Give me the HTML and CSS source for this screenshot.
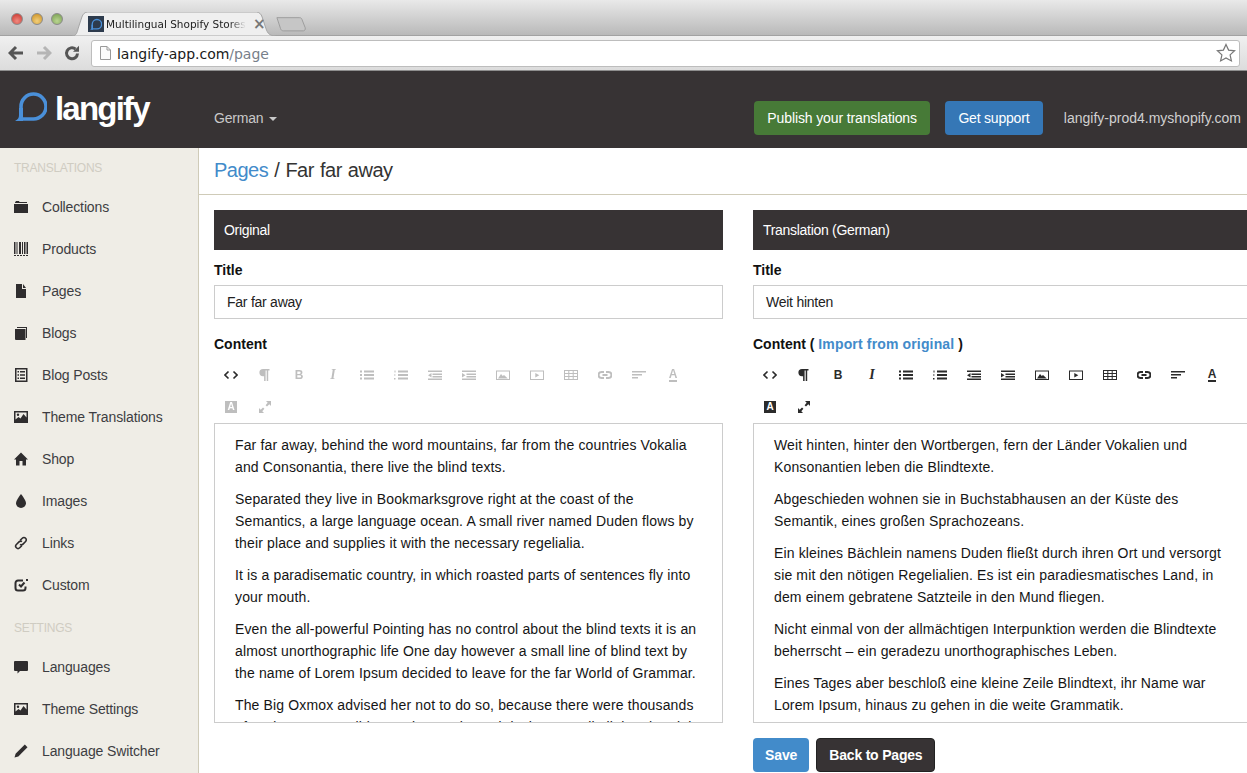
FILE: index.html
```html
<!DOCTYPE html>
<html lang="en">
<head>
<meta charset="utf-8">
<title>langify</title>
<link rel="stylesheet" href="styles.css">
</head>
<body>
<svg class="sprite" aria-hidden="true">
  <symbol id="bubble" viewBox="0 0 32 30"><path class="ring" d="M6 15.500A12.500 12.500 0 1 1 18.500 28H6z"/><path class="tail" d="M4 17h4v13H0c3-1.500 4-3 4-6z"/></symbol>
  <symbol id="i-folder" viewBox="0 0 14 14"><path d="M1 2.500 2 1h3l.5 1H13v1H1zM0 4h14v9H0z"/></symbol>
  <symbol id="i-barcode" viewBox="0 0 14 14"><path d="M0 0h1.500v12H0zM2.500 0h1v12h-1zM5 0h2v12H5zM8 0h1v12H8zM10 0h1.500v12H10zM12.500 0H14v12h-1.500zM0 13h2v1H0zM3 13h2v1H3zM6 13h2v1H6zM9 13h2v1H9zM12 13h2v1h-2z"/></symbol>
  <symbol id="i-file" viewBox="0 0 14 14"><path d="M2 0h6v5h4v9H2zM9 0l3 4H9z"/></symbol>
  <symbol id="i-book" viewBox="0 0 14 14"><path d="M1 3h10.500v11H2a1 1 0 0 1-1-1zM3 1h10v11h-1V2H3z"/></symbol>
  <symbol id="i-list" viewBox="0 0 14 14"><path fill-rule="evenodd" d="M1 0h12.500v14H1zM2.500 1.500v11H12v-11z"/><path d="M3.500 3H5v1.500H3.500zM6 3h5v1.500H6zM3.500 6.300H5v1.500H3.500zM6 6.300h5v1.500H6zM3.500 9.500H5V11H3.500zM6 9.500h5V11H6z"/></symbol>
  <symbol id="i-image" viewBox="0 0 14 14"><path fill-rule="evenodd" d="M0 1h14v12H0zM1.500 2.500v7l3-2.500 2 1.500 3-4.500 3 3.500V2.500z"/><circle cx="4" cy="4.800" r="1.200"/></symbol>
  <symbol id="i-home" viewBox="0 0 14 14"><path d="M7 .5 14 7.500h-2V13.500H8.500V9h-3v4.500H2V7.500H0z"/></symbol>
  <symbol id="i-tint" viewBox="0 0 14 14"><path d="M7 0S2 6 2 9.300a5 4.700 0 0 0 10 0C12 6 7 0 7 0z"/></symbol>
  <symbol id="i-link" viewBox="0 0 14 14"><path class="line" d="M6.200 4.300 8.300 2.200a2.300 2.300 0 0 1 3.300 3.300L9 8.100a2.300 2.300 0 0 1-3 .2M7.800 9.700l-2.100 2.100a2.300 2.300 0 0 1-3.300-3.300L5 5.900a2.300 2.300 0 0 1 3-.2"/></symbol>
  <symbol id="i-edit" viewBox="0 0 14 14"><path class="line thick" d="M11.500 8.500V10a2.500 2.500 0 0 1-2.500 2.500H4A2.500 2.500 0 0 1 1.500 10V5A2.500 2.500 0 0 1 4 2.500h5M5 6.500l2 2 3.500-4"/><path d="M12 1h2v2h-2z"/></symbol>
  <symbol id="i-comment" viewBox="0 0 14 14"><path d="M1 1h12a1 1 0 0 1 1 1v8a1 1 0 0 1-1 1H6l-2.500 2.500V11H1a1 1 0 0 1-1-1V2a1 1 0 0 1 1-1z"/></symbol>
  <symbol id="i-pencil" viewBox="0 0 14 14"><path d="M10.800.5 13.500 3.200 4.300 12.400 0.500 13.500 1.600 9.700z"/></symbol>
  <symbol id="t-code" viewBox="0 0 14 14"><path class="line" d="M4.500 3.500 1 7l3.500 3.500M9.500 3.500 13 7l-3.500 3.500"/></symbol>
  <symbol id="t-para" viewBox="0 0 14 14"><path d="M5 1h6.500v1.500h-1.300V13H8.700V2.500H7.600V13H6.100V8.200H5A3.600 3.600 0 0 1 5 1z"/></symbol>
  <symbol id="t-ul" viewBox="0 0 14 14"><path d="M0 2.500h2v2H0zM4 2.500h10v2H4zM0 6h2v2H0zM4 6h10v2H4zM0 9.500h2v2H0zM4 9.500h10v2H4z"/></symbol>
  <symbol id="t-ol" viewBox="0 0 14 14"><path d="M.5 2.500h1v2h-1zM4 2.500h10v2H4zM0 6.500h1.500v1H0zM4 6h10v2H4zM0 10h1.500v1.500H0zM4 9.500h10v2H4z"/></symbol>
  <symbol id="t-outdent" viewBox="0 0 14 14"><path d="M0 2.500h14v1.500H0zM4.500 5.500H14V7H4.500zM4.500 8H14v1.500H4.500zM0 10.500h14V12H0zM3.500 5v4.500L0 7.300z"/></symbol>
  <symbol id="t-indent" viewBox="0 0 14 14"><path d="M0 2.500h14v1.500H0zM4.500 5.500H14V7H4.500zM4.500 8H14v1.500H4.500zM0 10.500h14V12H0zM0 5v4.500l3.500-2.200z"/></symbol>
  <symbol id="t-image" viewBox="0 0 14 14"><path fill-rule="evenodd" d="M0 2.500h14v9.500H0zM1 3.500V11h12V3.500z"/><path d="M2 10.500 5 6l1.800 2 1.200-1 3.800 3.500z"/></symbol>
  <symbol id="t-video" viewBox="0 0 14 14"><path fill-rule="evenodd" d="M0 2.500h14v9.500H0zM1 3.500V11h12V3.500zM5.300 5v4.500L9.300 7.200z"/></symbol>
  <symbol id="t-table" viewBox="0 0 14 14"><path fill-rule="evenodd" d="M0 2h14v10H0zM1 3v2h3.300V3zM5.300 3v2h3.400V3zM9.700 3v2H13V3zM1 6v2h3.300V6zM5.300 6v2h3.400V6zM9.700 6v2H13V6zM1 9v2h3.300V9zM5.300 9v2h3.400V9zM9.700 9v2H13V9z"/></symbol>
  <symbol id="t-link" viewBox="0 0 14 14"><path class="line thick" d="M6 4H3.500a3 3 0 0 0 0 6H6M8 4h2.500a3 3 0 0 1 0 6H8M4.500 7h5"/></symbol>
  <symbol id="t-align" viewBox="0 0 14 14"><path d="M0 3h14v1.500H0zM0 6h10v1.500H0zM0 9h6v1.500H0z"/></symbol>
  <symbol id="t-expand" viewBox="0 0 14 14"><path d="M8 1h5v5l-1.700-1.700-2.300 2.300L7.600 5.200l2.100-2.500zM6 13H1V8l1.700 1.700L5 7.400l1.400 1.400-2.100 2.500z"/></symbol>
</svg>

<div class="browser">
  <div class="tabstrip">
    <div class="lights"><span class="light red"></span><span class="light amber"></span><span class="light green"></span></div>
    <div class="tab">
      <svg class="tab-shape" viewBox="0 0 206 24" preserveAspectRatio="none"><path d="M0 24c5 0 5-4 7-10l3-9c1-3 3-5 6-5h170c3 0 5 2 6 5l3 9c2 6 3 10 11 10z"/></svg>
      <span class="favicon"><svg width="12" height="12"><use href="#bubble"/></svg></span>
      <span class="tab-title">Multilingual Shopify Stores</span>
      <span class="tab-close">×</span>
    </div>
    <svg class="newtab" width="31" height="17" viewBox="0 0 34 18"><path d="M1 1.500h25c1 0 2 .5 2.500 2l3.500 9c.5 2-.5 3.500-2 3.500H8c-1.500 0-2.500-1-3-2.500l-4-12z"/></svg>
  </div>
  <div class="navbar">
    <svg class="nav-icon back" viewBox="0 0 16 16"><path d="M8 2 2 8l6 6M2.500 8H15"/></svg>
    <svg class="nav-icon fwd" viewBox="0 0 16 16"><path d="M8 2l6 6-6 6M13.500 8H1"/></svg>
    <svg class="nav-icon reload" viewBox="0 0 16 16"><path d="M13.500 8.500A5.500 5.500 0 1 1 11.500 4"/><path class="head" d="M9 6.800 15 .8v6z"/></svg>
    <div class="omnibox">
      <svg class="page-icon" width="11" height="14" viewBox="0 0 11 14"><path d="M.5.500h6.500l3.500 3.500v9.500H.5zM7 .5V4h3.500"/></svg>
      <span class="url">langify-app.com<span class="url-path">/page</span></span>
      <svg class="star" width="20" height="20" viewBox="0 0 20 20"><path d="M10 1.500l2.600 5.600 6 .7-4.500 4.100 1.300 6L10 14.900l-5.400 3 1.300-6L1.400 7.800l6-.7z"/></svg>
    </div>
  </div>
</div>

<header class="topbar">
  <div class="brand"><svg class="brand-mark" width="32" height="30"><use href="#bubble"/></svg><span class="brand-name">langify</span></div>
  <div class="lang">German<span class="caret"></span></div>
  <div class="top-actions">
    <a class="btn btn-green">Publish your translations</a>
    <a class="btn btn-blue">Get support</a>
    <span class="shop">langify-prod4.myshopify.com</span>
  </div>
</header>

<div class="layout">
  <nav class="sidebar">
    <div class="side-head">TRANSLATIONS</div>
    <a class="side-item"><svg class="side-icon"><use href="#i-folder"/></svg>Collections</a>
    <a class="side-item"><svg class="side-icon"><use href="#i-barcode"/></svg>Products</a>
    <a class="side-item"><svg class="side-icon"><use href="#i-file"/></svg>Pages</a>
    <a class="side-item"><svg class="side-icon"><use href="#i-book"/></svg>Blogs</a>
    <a class="side-item"><svg class="side-icon"><use href="#i-list"/></svg>Blog Posts</a>
    <a class="side-item"><svg class="side-icon"><use href="#i-image"/></svg>Theme Translations</a>
    <a class="side-item"><svg class="side-icon"><use href="#i-home"/></svg>Shop</a>
    <a class="side-item"><svg class="side-icon"><use href="#i-tint"/></svg>Images</a>
    <a class="side-item"><svg class="side-icon"><use href="#i-link"/></svg>Links</a>
    <a class="side-item"><svg class="side-icon"><use href="#i-edit"/></svg>Custom</a>
    <div class="side-head second">SETTINGS</div>
    <a class="side-item"><svg class="side-icon"><use href="#i-comment"/></svg>Languages</a>
    <a class="side-item"><svg class="side-icon"><use href="#i-image"/></svg>Theme Settings</a>
    <a class="side-item"><svg class="side-icon"><use href="#i-pencil"/></svg>Language Switcher</a>
  </nav>

  <main class="main">
    <h1 class="page-title"><a class="link">Pages</a> / Far far away</h1>
    <div class="columns">
      <section class="panel">
        <h2 class="panel-head">Original</h2>
        <div class="label">Title</div>
        <div class="input">Far far away</div>
        <div class="label content-label">Content</div>
        <div class="toolbar off">
          <span class="tool live"><svg><use href="#t-code"/></svg></span>
          <span class="tool"><svg><use href="#t-para"/></svg></span>
          <span class="tool"><b class="tb">B</b></span>
          <span class="tool"><i class="ti">I</i></span>
          <span class="tool"><svg><use href="#t-ul"/></svg></span>
          <span class="tool"><svg><use href="#t-ol"/></svg></span>
          <span class="tool"><svg><use href="#t-outdent"/></svg></span>
          <span class="tool"><svg><use href="#t-indent"/></svg></span>
          <span class="tool"><svg><use href="#t-image"/></svg></span>
          <span class="tool"><svg><use href="#t-video"/></svg></span>
          <span class="tool"><svg><use href="#t-table"/></svg></span>
          <span class="tool"><svg><use href="#t-link"/></svg></span>
          <span class="tool"><svg><use href="#t-align"/></svg></span>
          <span class="tool"><b class="ta">A</b></span>
          <span class="tool"><b class="tbg">A</b></span>
          <span class="tool"><svg><use href="#t-expand"/></svg></span>
        </div>
        <div class="editor">
          <p>Far far away, behind the word mountains, far from the countries Vokalia and Consonantia, there live the blind texts.</p>
          <p>Separated they live in Bookmarksgrove right at the coast of the Semantics, a large language ocean. A small river named Duden flows by their place and supplies it with the necessary regelialia.</p>
          <p>It is a paradisematic country, in which roasted parts of sentences fly into your mouth.</p>
          <p>Even the all-powerful Pointing has no control about the blind texts it is an almost unorthographic life One day however a small line of blind text by the name of Lorem Ipsum decided to leave for the far World of Grammar.</p>
          <p>The Big Oxmox advised her not to do so, because there were thousands of Bad Commas, wild Question Marks and devious Semikoli, but the Little Blind Text didn't listen.</p>
        </div>
      </section>
      <section class="panel">
        <h2 class="panel-head">Translation (German)</h2>
        <div class="label">Title</div>
        <div class="input">Weit hinten</div>
        <div class="label content-label">Content ( <a class="link">Import from original</a> )</div>
        <div class="toolbar">
          <span class="tool"><svg><use href="#t-code"/></svg></span>
          <span class="tool"><svg><use href="#t-para"/></svg></span>
          <span class="tool"><b class="tb">B</b></span>
          <span class="tool"><i class="ti">I</i></span>
          <span class="tool"><svg><use href="#t-ul"/></svg></span>
          <span class="tool"><svg><use href="#t-ol"/></svg></span>
          <span class="tool"><svg><use href="#t-outdent"/></svg></span>
          <span class="tool"><svg><use href="#t-indent"/></svg></span>
          <span class="tool"><svg><use href="#t-image"/></svg></span>
          <span class="tool"><svg><use href="#t-video"/></svg></span>
          <span class="tool"><svg><use href="#t-table"/></svg></span>
          <span class="tool"><svg><use href="#t-link"/></svg></span>
          <span class="tool"><svg><use href="#t-align"/></svg></span>
          <span class="tool"><b class="ta">A</b></span>
          <span class="tool"><b class="tbg">A</b></span>
          <span class="tool"><svg><use href="#t-expand"/></svg></span>
        </div>
        <div class="editor">
          <p>Weit hinten, hinter den Wortbergen, fern der Länder Vokalien und Konsonantien leben die Blindtexte.</p>
          <p>Abgeschieden wohnen sie in Buchstabhausen an der Küste des Semantik, eines großen Sprachozeans.</p>
          <p>Ein kleines Bächlein namens Duden fließt durch ihren Ort und versorgt sie mit den nötigen Regelialien. Es ist ein paradiesmatisches Land, in dem einem gebratene Satzteile in den Mund fliegen.</p>
          <p>Nicht einmal von der allmächtigen Interpunktion werden die Blindtexte beherrscht – ein geradezu unorthographisches Leben.</p>
          <p>Eines Tages aber beschloß eine kleine Zeile Blindtext, ihr Name war Lorem Ipsum, hinaus zu gehen in die weite Grammatik.</p>
        </div>
        <div class="form-actions">
          <a class="btn btn-save">Save</a>
          <a class="btn btn-back">Back to Pages</a>
        </div>
      </section>
    </div>
  </main>
</div>
</body>
</html>
```

FILE: styles.css
```css
* { box-sizing: border-box; }
html, body { height: 100%; }
body {
  margin: 0;
  height: 773px;
  overflow: hidden;
  font-family: "Liberation Sans", Arial, sans-serif;
  font-size: 14px;
  color: #333;
  background: #fff;
}
.sprite { display: none; }
.ring { fill: none; stroke: #4a90d9; stroke-width: 3.600; }
.tail { fill: #4a90d9; }
.line { fill: none; stroke: currentColor; stroke-width: 1.600; }
.thick { stroke-width: 2; }

/* browser chrome */
.browser { height: 71px; display: flex; flex-direction: column; }
.tabstrip {
  height: 36px;
  display: flex;
  align-items: flex-end;
  padding-left: 11px;
  background: linear-gradient(#e9e9e9, #b9b9b9);
  border-bottom: 1px solid #a2a2a2;
}
.lights { display: flex; gap: 8px; align-self: flex-start; margin-top: 13px; }
.light { width: 12px; height: 12px; border-radius: 50%; border: 1px solid #8b8b8b; }
.light.red { background: radial-gradient(circle at 50% 70%, #f08a80, #c9312a); }
.light.amber { background: radial-gradient(circle at 50% 70%, #f2cf7a, #c98d1f); }
.light.green { background: radial-gradient(circle at 50% 70%, #b9d590, #769c4f); }
.tab {
  position: relative;
  width: 204px;
  height: 24px;
  margin-left: 9px;
  margin-bottom: -1px;
  padding-left: 16px;
  display: flex;
  align-items: center;
  font-family: "DejaVu Sans", sans-serif;
  font-size: 10.500px;
  color: #222;
}
.tab-shape { position: absolute; inset: 0; width: 100%; height: 100%; }
.tab-shape path { fill: #efefef; stroke: #a5a5a5; stroke-width: 1; }
.favicon {
  position: relative;
  width: 16px;
  height: 16px;
  background: #2d3b4d;
  display: flex;
  align-items: center;
  justify-content: center;
  flex: none;
}
.tab-title {
  position: relative;
  width: 140px;
  margin-left: 2px;
  white-space: nowrap;
  overflow: hidden;
  -webkit-mask-image: linear-gradient(90deg, #000 88%, transparent);
  mask-image: linear-gradient(90deg, #000 88%, transparent);
}
.tab-close { position: relative; margin-left: 7px; font-size: 15px; color: #777; font-weight: bold; }
.newtab { margin: 0 0 2px 0; }
.newtab path { fill: #c6c6c6; stroke: #999; }
.navbar {
  flex: 1;
  display: flex;
  align-items: center;
  padding: 0 7px 0 8px;
  background: linear-gradient(#f0f0f0, #dcdcdc);
  border-bottom: 1px solid #8e8e8e;
}
.nav-icon { width: 16px; height: 16px; fill: none; stroke-width: 3; margin-right: 12px; flex: none; }
.nav-icon.back { stroke: #555; }
.nav-icon.fwd { stroke: #b5b5b5; }
.nav-icon.reload { stroke: #555; margin-right: 11px; }
.nav-icon .head { fill: #555; stroke: none; }
.omnibox {
  flex: 1;
  height: 27px;
  display: flex;
  align-items: center;
  padding: 0 3px 0 8px;
  background: #fff;
  border: 1px solid #bdbdbd;
  border-radius: 3px;
}
.page-icon { fill: #fbfbfb; stroke: #999; }
.url { margin-left: 6px; padding-top: 2px; flex: 1; font-family: "DejaVu Sans", sans-serif; font-size: 14px; letter-spacing: -.02px; color: #1a1a1a; }
.url-path { color: #77808a; }
.star { fill: #fff; stroke: #777; stroke-width: 1.200; }

/* top bar */
.topbar {
  height: 77px;
  display: flex;
  align-items: center;
  background: #373334;
  color: #fff;
}
.brand {
  width: 214px;
  align-self: flex-start;
  display: flex;
  align-items: flex-start;
  padding: 20px 0 0 15px;
  gap: 8px;
  flex: none;
}
.brand-name { font-size: 33px; font-weight: bold; letter-spacing: -1.800px; line-height: 40px; margin-top: -2px; }
.lang { color: #c9c9c9; font-size: 14px; letter-spacing: -.2px; display: flex; align-items: center; margin-top: 17px; }
.caret {
  width: 0;
  height: 0;
  margin-left: 6px;
  margin-top: 1px;
  border-left: 4px solid transparent;
  border-right: 4px solid transparent;
  border-top: 4px solid #c9c9c9;
}
.top-actions { margin-left: auto; display: flex; align-items: center; padding-right: 6px; margin-top: 17px; }
.btn {
  display: inline-flex;
  align-items: center;
  justify-content: center;
  height: 34px;
  padding: 0 13px;
  border-radius: 4px;
  border: 1px solid transparent;
  color: #fff;
  font-size: 14px;
  white-space: nowrap;
}
.btn-green { background: #477a37; letter-spacing: -.12px; padding: 0 12px; }
.btn-blue { background: #3577b6; margin-left: 15px; letter-spacing: -.2px; padding: 0 12.500px; }
.shop { margin-left: 21px; color: #d0d0d0; }

/* layout */
.layout { display: flex; height: 625px; overflow: hidden; }
.sidebar {
  width: 199px;
  flex: none;
  background: #efede6;
  border-right: 1px solid #cfcbb8;
}
.side-head {
  height: 38px;
  line-height: 41px;
  padding-left: 14px;
  color: #cfccc2;
  font-size: 12px;
  letter-spacing: -.25px;
}
.side-head.second { margin-top: 2px; }
.side-item {
  height: 42px;
  display: flex;
  align-items: center;
  padding-left: 14px;
  color: #3d3d42;
  font-size: 14px;
  letter-spacing: -.13px;
}
.side-icon { width: 14px; height: 14px; margin-right: 14px; fill: #2f2d2e; color: #2f2d2e; flex: none; }

.main { flex: 1; min-width: 0; overflow: hidden; }
.page-title {
  height: 47px;
  margin: 0;
  padding-left: 15px;
  line-height: 44px;
  font-size: 20px;
  font-weight: normal;
  color: #333;
  letter-spacing: -.5px;
  word-spacing: 1px;
  border-bottom: 1px solid #cfcbb8;
}
.link { color: #428bca; }
.columns { display: flex; gap: 30px; padding: 15px 0 0 15px; }
.panel { width: 509px; flex: none; }
.panel-head {
  height: 40px;
  margin: 0;
  padding-left: 10px;
  line-height: 40px;
  font-size: 14px;
  font-weight: normal;
  color: #fff;
  background: #373334;
  letter-spacing: -.3px;
}
.label { margin-top: 11px; line-height: 18px; font-weight: bold; color: #111; }
.input {
  height: 34px;
  margin-top: 6px;
  padding: 0 12px;
  line-height: 32px;
  color: #222;
  border: 1px solid #ccc;
  letter-spacing: -.25px;
}
.content-label { margin-top: 16px; }
.content-label .link { letter-spacing: .15px; }
.toolbar { display: flex; flex-wrap: wrap; height: 64px; margin-top: 6px; color: #2b2b2b; }
.tool {
  width: 34px;
  height: 32px;
  display: flex;
  align-items: center;
  justify-content: center;
}
.tool svg { width: 14px; height: 14px; fill: currentColor; }
.toolbar.off .tool { opacity: .3; }
.toolbar.off .tool.live { opacity: 1; }
.tb { font-size: 12px; }
.ti { font: italic bold 14px "Liberation Serif", serif; }
.ta { font-size: 12px; border-bottom: 2px solid currentColor; line-height: 12px; }
.tbg {
  width: 12px;
  height: 12px;
  font-size: 10px;
  line-height: 12px;
  text-align: center;
  color: #fff;
  background: #2b2b2b;
}
.editor {
  height: 300px;
  padding: 10px 20px 0;
  overflow: hidden;
  border: 1px solid #ccc;
  line-height: 22px;
  color: #151515;
  letter-spacing: .14px;
}
.editor p { margin: 0 0 10px; }
.form-actions { display: flex; gap: 7px; margin-top: 15px; }
.btn-save { background: #428bca; font-weight: bold; padding: 0 11px; letter-spacing: -.1px; }
.btn-back { background: #373334; border-color: #222; font-weight: bold; padding: 0 12px; letter-spacing: -.2px; }
```
